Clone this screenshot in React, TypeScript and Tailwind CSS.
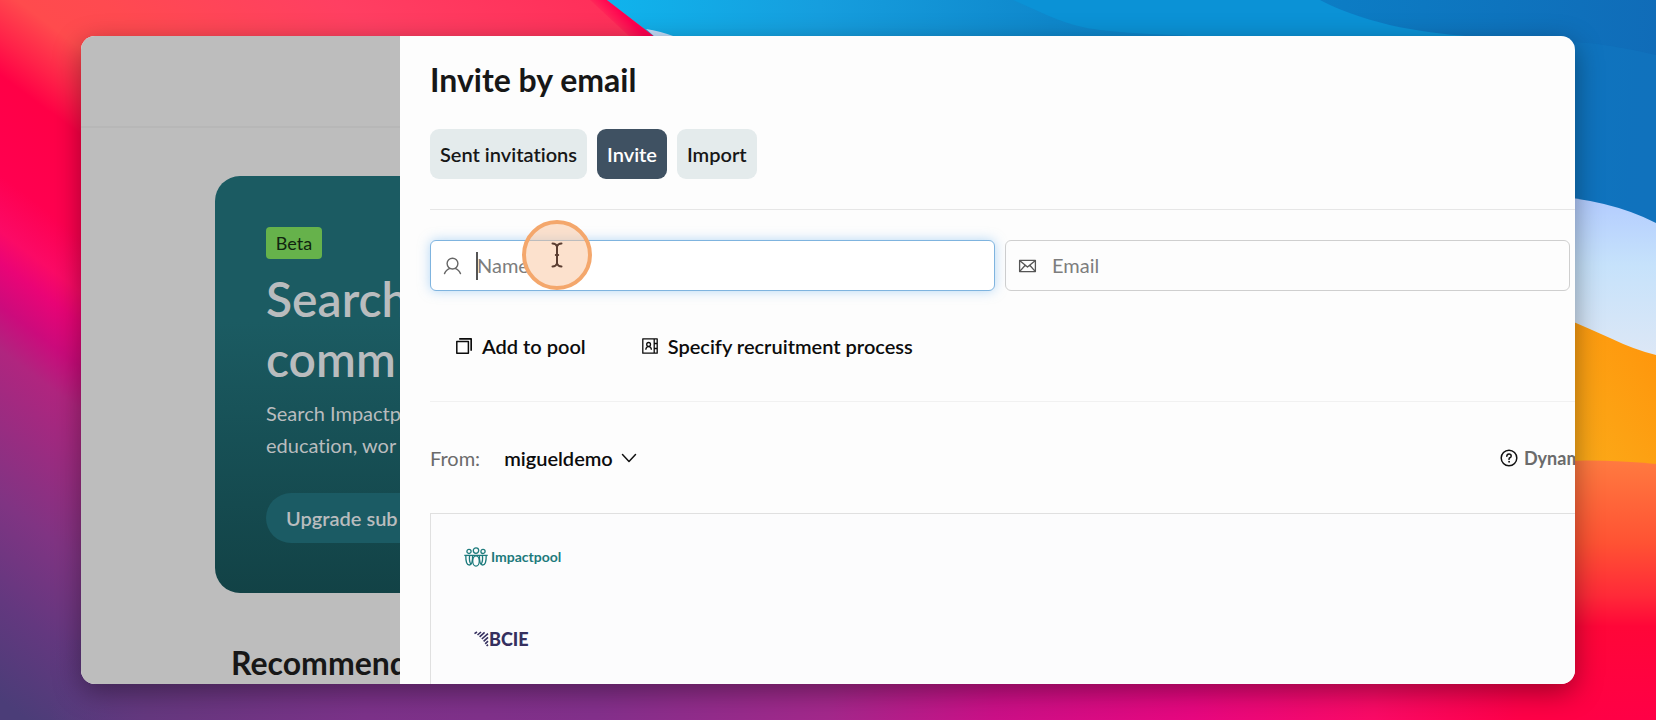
import { useState } from "react";

const tabs = ["Sent invitations", "Invite", "Import"];

function Wallpaper() {
  return (
    <svg
      className="absolute inset-0 h-full w-full"
      viewBox="0 0 1656 720"
      preserveAspectRatio="none"
      aria-hidden="true"
    >
      <defs>
        <linearGradient id="base" gradientUnits="userSpaceOnUse" x1="240" y1="-320" x2="-360" y2="480">
          <stop offset="0" stopColor="#ff2b58" />
          <stop offset="0.2" stopColor="#ff3f62" />
          <stop offset="0.34" stopColor="#ff4a50" />
          <stop offset="0.39" stopColor="#ff4b4d" />
          <stop offset="0.43" stopColor="#ff2249" />
          <stop offset="0.46" stopColor="#ff0046" />
          <stop offset="0.54" stopColor="#ff0050" />
          <stop offset="0.585" stopColor="#fb0a66" />
          <stop offset="0.61" stopColor="#ea0476" />
          <stop offset="0.645" stopColor="#cc0b7c" />
          <stop offset="0.68" stopColor="#b0257f" />
          <stop offset="0.8" stopColor="#803483" />
          <stop offset="0.88" stopColor="#63387f" />
          <stop offset="0.96" stopColor="#4b3d78" />
        </linearGradient>
        <linearGradient id="floor" gradientUnits="userSpaceOnUse" x1="0" y1="0" x2="1656" y2="0">
          <stop offset="0.03" stopColor="#5a3a80" stopOpacity="0" />
          <stop offset="0.09" stopColor="#65387f" />
          <stop offset="0.22" stopColor="#7c328a" />
          <stop offset="0.36" stopColor="#84308c" />
          <stop offset="0.5" stopColor="#a4288c" />
          <stop offset="0.6" stopColor="#cc1088" />
          <stop offset="0.72" stopColor="#e80780" />
          <stop offset="0.83" stopColor="#fb0a66" />
          <stop offset="0.92" stopColor="#ff0048" />
          <stop offset="1" stopColor="#ff0040" />
        </linearGradient>
        <linearGradient id="sky" gradientUnits="userSpaceOnUse" x1="610" y1="0" x2="1656" y2="60">
          <stop offset="0" stopColor="#10b3ec" />
          <stop offset="0.2" stopColor="#169ede" />
          <stop offset="0.42" stopColor="#0f88cc" />
          <stop offset="0.7" stopColor="#0c7cc4" />
          <stop offset="1" stopColor="#106cb8" />
        </linearGradient>
        <linearGradient id="ice" x1="0" y1="0" x2="0" y2="1">
          <stop offset="0" stopColor="#b2cbff" />
          <stop offset="0.4" stopColor="#c6e2fb" />
          <stop offset="1" stopColor="#e0e8f5" />
        </linearGradient>
        <linearGradient id="amber" x1="0" y1="1" x2="1" y2="0">
          <stop offset="0" stopColor="#fbb01c" />
          <stop offset="1" stopColor="#ff930a" />
        </linearGradient>
        <linearGradient id="coral" x1="0" y1="0" x2="0" y2="1">
          <stop offset="0" stopColor="#ff7a40" />
          <stop offset="0.32" stopColor="#ff5233" />
          <stop offset="0.52" stopColor="#ff2a38" />
          <stop offset="0.64" stopColor="#ff0638" />
          <stop offset="1" stopColor="#ff0046" />
        </linearGradient>
        <linearGradient id="ridge" gradientUnits="userSpaceOnUse" x1="618" y1="32" x2="630" y2="20">
          <stop offset="0" stopColor="#ff0050" stopOpacity="0" />
          <stop offset="1" stopColor="#ff0050" />
        </linearGradient>
      </defs>
      <rect width="1656" height="720" fill="url(#base)" />
      <rect y="640" width="1656" height="80" fill="url(#floor)" />
      <path d="M590 0H607L655 37H630Z" fill="url(#ridge)" />
      <path d="M607 0H1656V260H760L655 37Z" fill="url(#sky)" />
      <path d="M1013 0C1045 14 1066 26 1100 30C1140 35 1170 34 1200 37H1480C1430 34 1370 26 1320 0Z" fill="#0b92d6" />
      <path d="M1575 42Q1610 44 1656 55V230L1575 200Z" fill="#1078c2" opacity="0.5" />
      <path d="M646 29Q660 31 676 37H655Z" fill="#c3dcf8" />
      <path d="M1540 195Q1610 199 1656 223V370H1540Z" fill="url(#ice)" />
      <path d="M1540 308Q1570 320 1610 338Q1635 350 1656 355V480H1540Z" fill="url(#amber)" />
      <path d="M1540 462Q1600 458 1656 464V720H1540Z" fill="url(#coral)" />
    </svg>
  );
}

function UserIcon() {
  return (
    <svg className="size-5" viewBox="0 0 20 20" fill="none" stroke="currentColor" strokeWidth="1.4" strokeLinecap="round">
      <circle cx="9.5" cy="7.6" r="5.4" />
      <path d="M1.5 17.6Q3.4 13.4 7 12.4M17.5 17.6Q15.6 13.4 12 12.4" />
    </svg>
  );
}

function MailIcon() {
  return (
    <svg className="size-5" viewBox="0 0 20 20" fill="none" stroke="currentColor" strokeWidth="1.3" strokeLinejoin="round">
      <path d="M1.6 4.4H17.4V15.6H1.6ZM1.6 4.4L9.5 11L17.4 4.4M1.6 15.6L7.2 9.2M17.4 15.6L11.8 9.2" />
    </svg>
  );
}

function PoolIcon() {
  return (
    <svg className="size-4" viewBox="0 0 16 16" fill="none" stroke="currentColor" strokeWidth="1.5" strokeLinejoin="round">
      <path d="M0.8 3.6H12.4V15.2H0.8Z" />
      <path d="M3.2 0.9H15.2V12.8" strokeWidth="1.7" />
    </svg>
  );
}

function ProcessIcon() {
  return (
    <svg className="size-4" viewBox="0 0 16 16" fill="none" stroke="currentColor" strokeWidth="1.3" strokeLinejoin="round">
      <path d="M0.8 0.8H12.2V15.2H0.8ZM12.2 0.8H15.2V15.2H12.2M12.2 5.5H15.2M12.2 10.5H15.2" />
      <circle cx="6.6" cy="6.4" r="1.9" />
      <path d="M3.8 11.8Q4 8.7 6.6 8.7Q9.2 8.7 9.4 11.8" />
    </svg>
  );
}

function HelpIcon() {
  return (
    <svg className="size-[18px]" viewBox="0 0 18 18" fill="none" stroke="#111" strokeWidth="1.5" strokeLinecap="round">
      <circle cx="9" cy="9" r="7.8" />
      <path d="M6.8 7.2Q6.9 4.9 9 4.9Q11.2 4.9 11.2 7Q11.2 8.3 9.9 8.8Q9 9.2 9 10.4" />
      <circle cx="9" cy="12.8" r="0.5" fill="#111" strokeWidth="0.8" />
    </svg>
  );
}

function ImpactpoolLogo() {
  return (
    <div className="flex items-center gap-[3px] text-[#1c7a7c]">
      <svg className="h-5 w-6" viewBox="0 0 24 20" fill="none" stroke="currentColor" strokeWidth="1.3">
        <circle cx="5" cy="4.4" r="2.1" />
        <circle cx="12" cy="3.6" r="2.7" />
        <circle cx="19" cy="4.4" r="2.1" />
        <path d="M0.3 8.4H23.7" />
        <path d="M1.8 8.6Q1.6 18 5.4 18Q8.8 18 8.6 8.6" />
        <path d="M22.2 8.6Q22.4 18 18.6 18Q15.2 18 15.4 8.6" />
        <path d="M5.6 8.6Q4.8 14 7 17.4M18.4 8.6Q19.2 14 17 17.4" />
        <ellipse cx="12" cy="14" rx="3.3" ry="5.2" />
      </svg>
      <span className="text-sm leading-5 font-bold">Impactpool</span>
    </div>
  );
}

function BcieLogo() {
  return (
    <div className="flex items-center text-[#35305f]">
      <svg className="h-4 w-[15px]" viewBox="0 0 15 16" fill="none" stroke="currentColor" strokeWidth="1.6">
        <path d="M0.5 2.6L3 1M3.5 4L7 1M5.6 5.8L10.6 1.4M7.8 8L14 2.6M9.6 10.4L14 6.4M11.2 12.8L14 10.2M12.6 15L14 13.6" />
      </svg>
      <span className="text-lg leading-5 font-black">BCIE</span>
    </div>
  );
}

export default function App() {
  const [tab, setTab] = useState("Invite");
  const [name, setName] = useState("");
  const [email, setEmail] = useState("");

  return (
    <div className="relative h-screen overflow-hidden px-[81px] py-9 font-['Lato',sans-serif] text-xl leading-8 text-[#171717] [font-variant-ligatures:none]">
      <Wallpaper />

      <div className="relative flex h-full overflow-hidden rounded-[14px] bg-[#fdfdfd] shadow-[0_8px_28px_rgba(0,0,0,0.38)]">
        {/* Dimmed page behind the drawer */}
        <div className="w-[319px] shrink-0 overflow-hidden bg-[#bdbdbd] whitespace-nowrap">
          <div className="h-[92px] border-b-2 border-[#b7b7b7]" />
          <section className="mt-12 ml-[134px] overflow-hidden rounded-l-[25px] bg-linear-to-b from-[#1b5b62] from-35% to-[#124246] pt-[51px] pb-[50px] pl-[51px] text-[#b9bcbe]">
            <span className="block h-8 w-14 rounded bg-[#66b24b] text-center text-lg leading-8 text-[#10250f]">
              Beta
            </span>
            <h1 className="mt-2.5 text-5xl leading-[60px] font-semibold">
              Search
              <br />
              comm
            </h1>
            <p className="mt-2">
              Search Impactp
              <br />
              education, wor
            </p>
            <button className="mt-8 h-[50px] w-full rounded-l-full bg-[#1b5b64] px-5 text-left font-semibold">
              Upgrade sub
            </button>
          </section>
          <h2 className="mt-[50px] ml-[150px] text-[32px] leading-10 font-bold">Recommend</h2>
        </div>

        {/* Drawer */}
        <main className="min-w-0 flex-1 pt-6 pl-[30px]">
          <h2 className="text-[32px] leading-10 font-bold">Invite by email</h2>

          <div className="mt-[29px] flex gap-2.5">
            {tabs.map((t) => (
              <button
                key={t}
                onClick={() => setTab(t)}
                className={`h-[50px] rounded-[9px] px-2.5 font-semibold ${
                  t === tab ? "bg-[#3f5162] text-white" : "bg-[#e4ebec]"
                }`}
              >
                {t}
              </button>
            ))}
          </div>

          <hr className="mt-[30px] border-[#e6e6e6]" />

          <div className="mt-[30px] grid grid-cols-2 gap-2.5 pr-[5px]">
            <label className="relative flex h-[51px] items-center gap-3.5 rounded-md border border-[#7fb4df] bg-white px-3 text-[#666] shadow-[0_0_12px_rgba(110,180,240,0.5)]">
              <UserIcon />
              <input
                aria-label="Name"
                placeholder="Name"
                value={name}
                onChange={(e) => setName(e.target.value)}
                className="min-w-0 flex-1 pb-0.5 caret-[#333] outline-none placeholder:text-[#7d7d7d]"
              />
              {name === "" && <span className="absolute left-[45px] h-7 w-0.5 bg-[#555]" />}
              {/* Click highlight with the text cursor */}
              <span className="pointer-events-none absolute -top-[21px] left-[91px] flex size-[70px] items-center justify-center rounded-full border-4 border-[#f4a76c] bg-[#f9c39b]/50">
                <svg className="h-[26px] w-3" viewBox="0 0 12 26" fill="none" stroke="#5a3d31" strokeWidth="2" strokeLinecap="round">
                  <path d="M1.5 1.5Q5 1.5 6 4.5Q7 1.5 10.5 1.5M6 4.5V21.5M1.5 24.5Q5 24.5 6 21.5Q7 24.5 10.5 24.5M4.8 13H7.2" />
                </svg>
              </span>
            </label>
            <label className="flex h-[51px] items-center gap-3.5 rounded-md border border-[#cfcfcf] px-3 text-[#555]">
              <MailIcon />
              <input
                type="email"
                aria-label="Email"
                placeholder="Email"
                value={email}
                onChange={(e) => setEmail(e.target.value)}
                className="min-w-0 flex-1 pb-0.5 outline-none placeholder:text-[#7d7d7d]"
              />
            </label>
          </div>

          <div className="mt-[30px] flex gap-1 font-semibold text-[#0c0c0c]">
            <button className="flex h-[50px] items-center gap-2.5 px-[26px]">
              <PoolIcon />
              Add to pool
            </button>
            <button className="flex h-[50px] items-center gap-2.5 px-[26px]">
              <ProcessIcon />
              Specify recruitment process
            </button>
          </div>

          <hr className="mt-[30px] border-[#f1f1f1]" />

          <div className="mt-[30px] flex h-[51px] items-center">
            <label htmlFor="from" className="text-[#6b6b6b]">
              From:
            </label>
            <div className="relative ml-6 flex items-center">
              <select id="from" className="appearance-none pr-6 font-semibold text-[#0c0c0c] outline-none">
                <option>migueldemo</option>
              </select>
              <svg className="pointer-events-none absolute right-0 h-4 w-4" viewBox="0 0 16 16" fill="none" stroke="#111" strokeWidth="1.5" strokeLinecap="round" strokeLinejoin="round">
                <path d="M1.5 4.5L8 11.5L14.5 4.5" />
              </svg>
            </div>
            <button className="ml-auto flex items-center gap-1.5 text-lg font-bold text-[#6b6b6b]">
              <HelpIcon />
              <span className="w-[51px] overflow-hidden whitespace-nowrap">Dynam</span>
            </button>
          </div>

          <div className="mt-[30px] h-full border-t border-l border-[#e0e0e0] bg-[#fcfcfd] pt-[33px] pl-[33px]">
            <ImpactpoolLogo />
            <div className="mt-[62px] ml-2.5">
              <BcieLogo />
            </div>
          </div>
        </main>
      </div>
    </div>
  );
}
